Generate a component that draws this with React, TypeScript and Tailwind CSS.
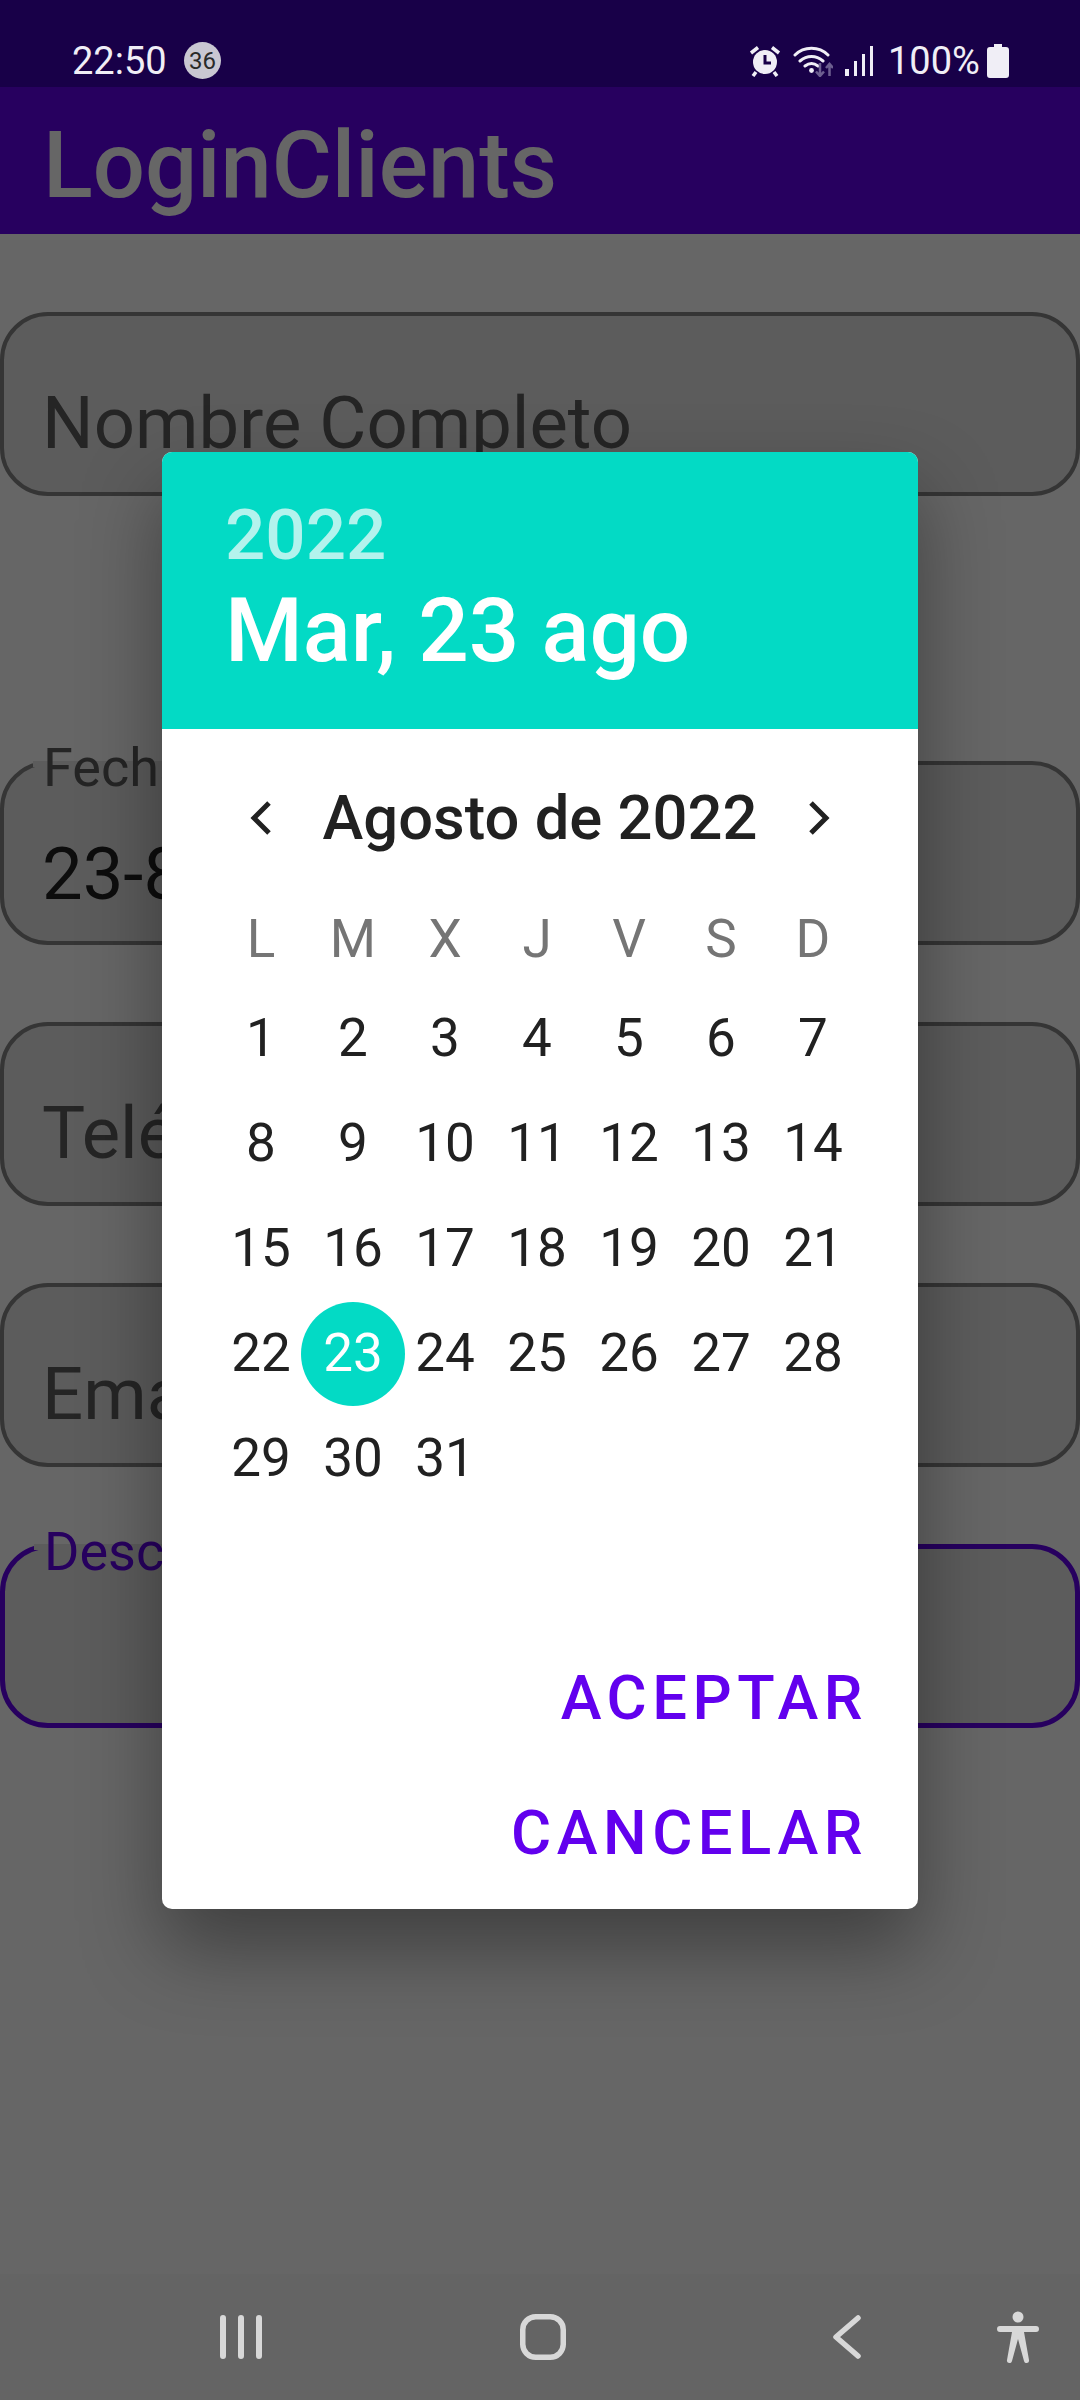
const days = Array.from({ length: 31 }, (_, i) => i + 1);
const week = ["L", "M", "X", "J", "V", "S", "D"];

function Field({ label, value, top, focused }: { label: string; value?: string; top?: boolean; focused?: boolean }) {
  return (
    <div
      className={`relative h-[184px] w-full rounded-[48px] bg-[#e6e6e6] ${
        focused ? "border-[5px] border-[#6200ee]" : "border-[4px] border-[#858585]"
      }`}
    >
      {top ? (
        <>
          <div className={`absolute left-[29px] h-[6px] w-[260px] bg-[#e6e6e6] ${focused ? "top-[-5px]" : "top-[-4px]"}`} />
          <div
            className={`absolute left-[39px] top-[-29px] text-[54px] leading-[64px] ${
              focused ? "text-[#6200ee]" : "text-[#5c5c5c]"
            }`}
          >
            {label}
          </div>
        </>
      ) : (
        <div className="absolute left-[38px] top-[60px] text-[72.400px] leading-[96px] text-[#5c5c5c]">{label}</div>
      )}
      {value && <div className="absolute left-[38px] top-[62px] text-[72.400px] leading-[96px] text-[#222222]">{value}</div>}
    </div>
  );
}

function StatusBar() {
  return (
    <div className="flex h-[87px] items-center justify-between bg-[#180048] pl-[72px] pr-[71px] pt-[34px] text-[38px] text-[#f0eef6]">
      <div className="flex items-center gap-[10px]">
        <span className="w-[102px] leading-[44px]">22:50</span>
        <span className="flex h-[37px] w-[37px] items-center justify-center rounded-full bg-[#c9c7d2] text-[24px] text-[#2a2a2a]">36</span>
      </div>
      <div className="flex items-center">
        <svg width="32" height="32" viewBox="0 0 32 32" fill="none" className="mr-[12px]">
          <circle cx="16" cy="17" r="12" fill="#f0eef6" />
          <path d="M16 10v8h6" stroke="#180048" strokeWidth="3" />
          <path d="M2 8 9 2.500M30 8 23 2.500M7 27l-3 4M25 27l3 4" stroke="#f0eef6" strokeWidth="3.500" />
        </svg>
        <svg width="40" height="32" viewBox="0 0 40 32" fill="none" className="mr-[11px]">
          <path d="M2 10C11 1 26 1 35 10M7 16c7-6 16-6 23 0M12 21c4-3 9-3 13 0" stroke="#f0eef6" strokeWidth="3" strokeLinecap="round" />
          <circle cx="18.500" cy="25.500" r="2.400" fill="#f0eef6" />
          <path d="M27 18v13m-4-4.500 4 4.500 4-4.500M36.500 31V19m-3.500 4 3.500-4 3.500 4" stroke="#6d5f90" strokeWidth="2.500" />
        </svg>
        <svg width="30" height="30" viewBox="0 0 30 30" className="mr-[14px]" fill="#f0eef6">
          <rect x="1" y="23" width="4" height="7" />
          <rect x="10" y="15" width="3" height="15" />
          <rect x="18" y="8" width="3" height="22" />
          <rect x="26" y="0" width="3" height="30" />
        </svg>
        <span className="w-[99px] leading-[44px]">100%</span>
        <svg width="22" height="34" viewBox="0 0 22 34" fill="#f0eef6">
          <path d="M7 0h8v3h4a3 3 0 0 1 3 3v25a3 3 0 0 1-3 3H3a3 3 0 0 1-3-3V6a3 3 0 0 1 3-3h4z" />
        </svg>
      </div>
    </div>
  );
}

function Dialog() {
  return (
    <div className="absolute left-[162px] top-[365px] w-[756px] overflow-hidden rounded-[10px] bg-white shadow-[0_40px_80px_rgba(0,0,0,0.38)]">
      <div className="flex h-[277px] flex-col bg-[#03dac5] pl-[63px] text-white">
        <div className="mt-[47px] text-[71px] font-medium leading-[72px] text-[#b3f3ed]">2022</div>
        <div className="mt-[10px] text-[89px] font-medium leading-[100px]">Mar, 23 ago</div>
      </div>
      <div className="flex h-[1180px] flex-col pl-[53px] pr-[59px]">
        <div className="mt-[55px] flex h-[68px] items-center justify-between pl-[35px] pr-[29px] text-[#212121]">
          <svg width="22" height="36" viewBox="0 0 22 36" fill="none">
            <path d="M19 3 4 18l15 15" stroke="#212121" strokeWidth="5" />
          </svg>
          <span className="text-[61.500px] font-medium leading-[68px]">Agosto de 2022</span>
          <svg width="22" height="36" viewBox="0 0 22 36" fill="none">
            <path d="m3 3 15 15L3 33" stroke="#212121" strokeWidth="5" />
          </svg>
        </div>
        <div className="mt-[41px] grid grid-cols-7 text-center text-[53px] text-[#212121]">
          {week.map((d) => (
            <div key={d} className="flex h-[93px] items-center justify-center text-[#757575]">
              {d}
            </div>
          ))}
          {days.map((d) => (
            <div key={d} className="relative flex h-[105px] items-center justify-center">
              {d === 23 && <span className="absolute h-[104px] w-[104px] rounded-full bg-[#03dac5]" />}
              <span className={`relative ${d === 23 ? "text-white" : ""}`}>{d}</span>
            </div>
          ))}
        </div>
        <div className="mb-[8px] mr-[-9px] mt-auto flex flex-col items-end text-[61.500px] font-medium uppercase leading-[135px] tracking-[0.09em] text-[#6200ee]">
          <span>Aceptar</span>
          <span>Cancelar</span>
        </div>
      </div>
    </div>
  );
}

function NavBar() {
  return (
    <div className="relative flex h-[126px] items-center bg-[#646464]">
      <svg width="42" height="44" viewBox="0 0 42 44" className="ml-[220px]" stroke="#d8d8d8" strokeWidth="6" strokeLinecap="round">
        <path d="M3 3v38M21 3v38M39 3v38" />
      </svg>
      <svg width="46" height="46" viewBox="0 0 46 46" className="ml-[258px]" fill="none" stroke="#d8d8d8" strokeWidth="5.500">
        <rect x="2.750" y="2.750" width="40.500" height="40.500" rx="13" />
      </svg>
      <svg width="28" height="44" viewBox="0 0 28 44" className="ml-[267px]" fill="none" stroke="#d8d8d8" strokeWidth="5.500" strokeLinecap="round" strokeLinejoin="round">
        <path d="M25 3 3 22l22 19" />
      </svg>
      <svg width="42" height="52" viewBox="0 0 42 52" className="ml-[136px]" fill="#d8d8d8">
        <circle cx="21" cy="6" r="5.500" />
        <path d="M3 15h36a3 3 0 0 1 0 6H27l5 28a2.500 2.500 0 0 1-5 1l-6-22-6 22a2.500 2.500 0 0 1-5-1l5-28H3a3 3 0 0 1 0-6z" />
      </svg>
    </div>
  );
}

export default function App() {
  return (
    <div className="flex h-[2400px] w-[1080px] flex-col overflow-hidden bg-white font-['Roboto',sans-serif]">
      <StatusBar />
      <div className="relative flex-1">
        <div className="flex h-[147px] items-center bg-[#6200ee] pl-[43px] pt-[10px] text-[92px] font-medium text-white">LoginClients</div>
        <div className="flex flex-col pt-[78px]">
          <Field label="Nombre Completo" />
          <div className="mt-[265px]"><Field label="Fecha" value="23-8-2022" top /></div>
          <div className="mt-[77px]"><Field label="Teléfono" /></div>
          <div className="mt-[77px]"><Field label="Email" /></div>
          <div className="mt-[77px]"><Field label="Descripción" top focused /></div>
        </div>
        <div className="absolute inset-0 bg-black/60" />
        <Dialog />
      </div>
      <NavBar />
    </div>
  );
}
